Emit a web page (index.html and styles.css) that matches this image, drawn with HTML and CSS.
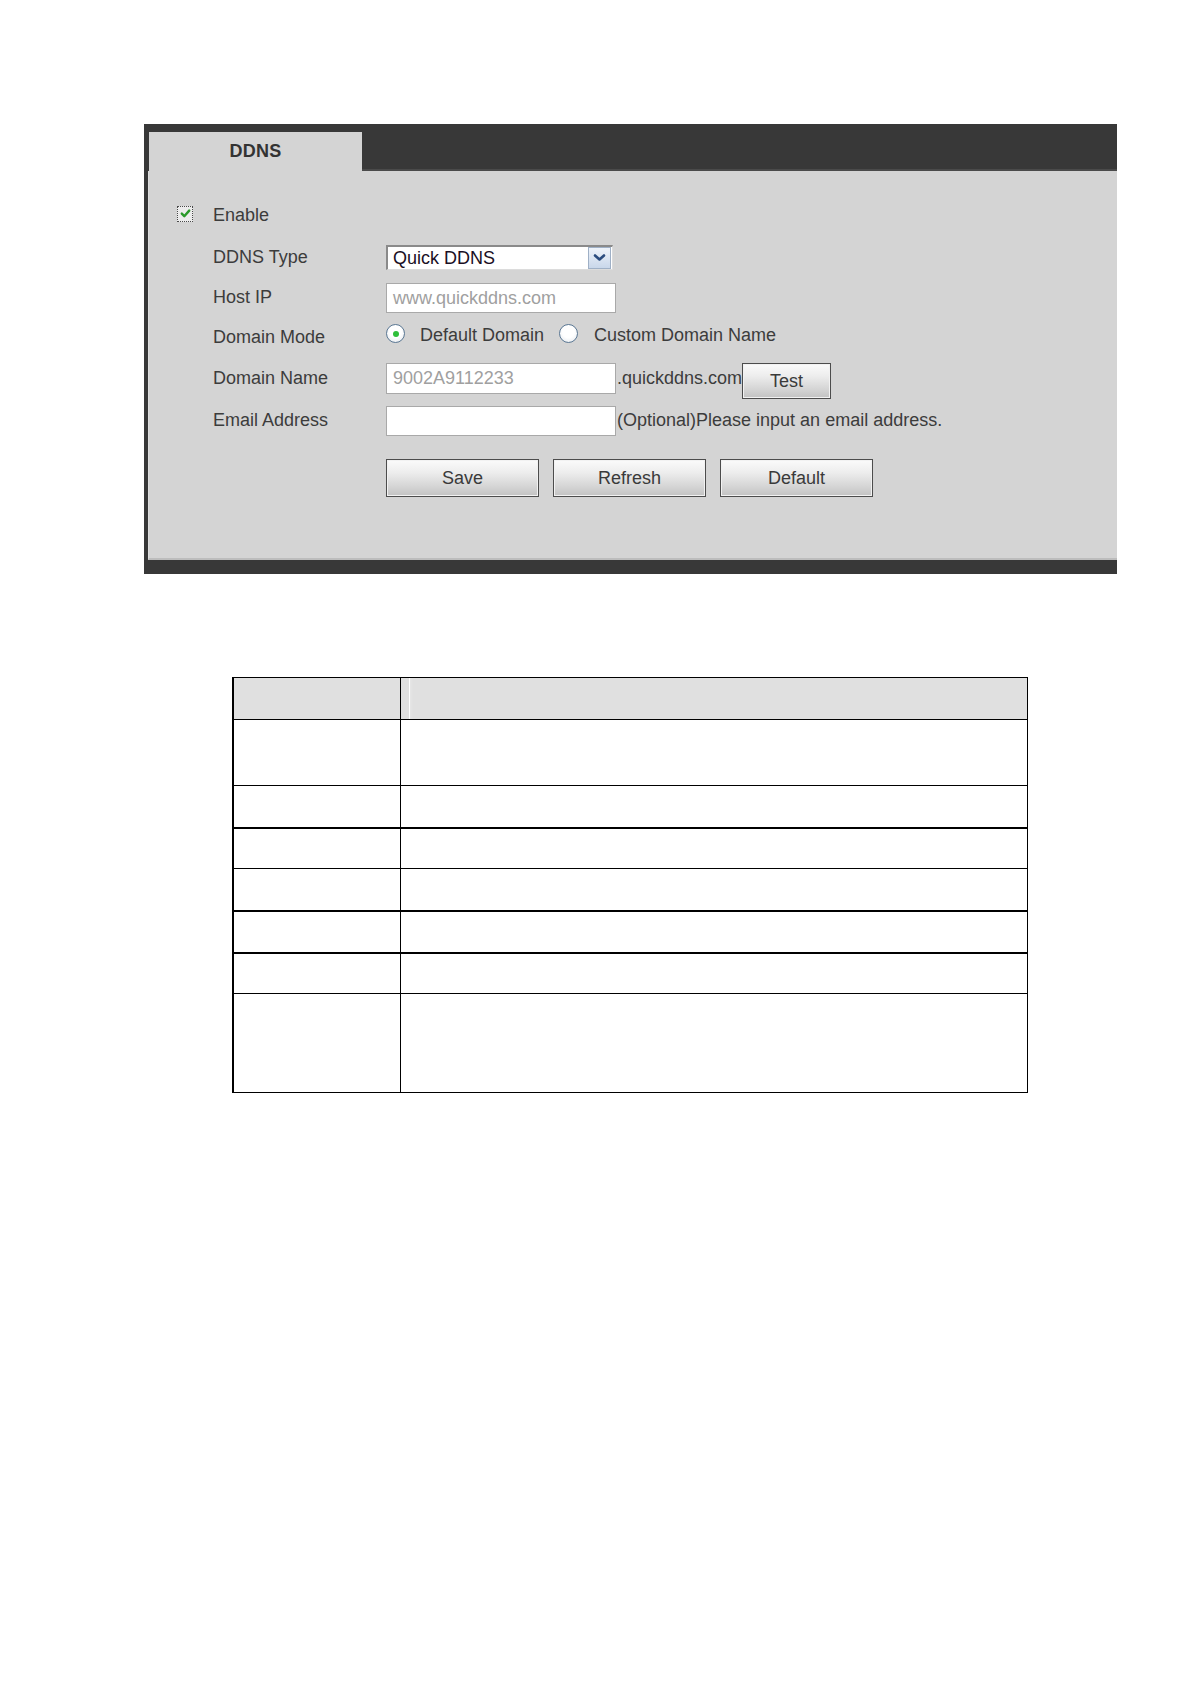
FILE: index.html
```html
<!DOCTYPE html>
<html lang="en">
<head>
<meta charset="utf-8">
<title>DDNS</title>
<link rel="stylesheet" href="styles.css">
</head>
<body>
<div class="panel">
  <div class="tabbar"><div class="tab">DDNS</div></div>
  <div class="content">
    <div class="row h41">
      <span class="cb"><svg width="13" height="13" viewBox="0 0 13 13"><path d="M2.8 6.6 L5.3 9.2 L10.2 3.6" fill="none" stroke="#2a9a2a" stroke-width="2.4" stroke-linecap="round" stroke-linejoin="round"/></svg></span>
      <span class="lbl">Enable</span>
    </div>
    <div class="row h42">
      <span></span>
      <span class="lbl">DDNS Type</span>
      <div class="select"><span class="sel-text">Quick DDNS</span><span class="sel-btn"><svg width="21" height="21" viewBox="0 0 21 21"><path d="M6 8.5 L10.5 12.5 L15 8.5" fill="none" stroke="#2b4c7e" stroke-width="2.6" stroke-linecap="round" stroke-linejoin="round"/></svg></span></div>
    </div>
    <div class="row h39">
      <span></span>
      <span class="lbl">Host IP</span>
      <div class="input dim">www.quickddns.com</div>
    </div>
    <div class="row h41">
      <span></span>
      <span class="lbl">Domain Mode</span>
      <div class="radios">
        <span class="radio on"></span><span class="lbl">Default Domain</span>
        <span class="radio"></span><span class="lbl">Custom Domain Name</span>
      </div>
    </div>
    <div class="row h41">
      <span></span>
      <span class="lbl">Domain Name</span>
      <div class="ctrl">
        <div class="input dim tall">9002A9112233</div><span class="suffix">.quickddns.com</span><button class="btn test">Test</button>
      </div>
    </div>
    <div class="row h43">
      <span></span>
      <span class="lbl">Email Address</span>
      <div class="ctrl">
        <div class="input"></div><span class="suffix">(Optional)Please input an email address.</span>
      </div>
    </div>
    <div class="row actions">
      <span></span>
      <span></span>
      <div class="btns">
        <button class="btn big">Save</button>
        <button class="btn big">Refresh</button>
        <button class="btn big">Default</button>
      </div>
    </div>
  </div>
</div>

<div class="grid">
  <div class="trow head"><div class="tc1"></div><div class="tc2"></div></div>
  <div class="trow r66"><div class="tc1"></div><div class="tc2"></div></div>
  <div class="trow r42"><div class="tc1"></div><div class="tc2"></div></div>
  <div class="trow r41 thick"><div class="tc1"></div><div class="tc2"></div></div>
  <div class="trow r42"><div class="tc1"></div><div class="tc2"></div></div>
  <div class="trow r42 thick"><div class="tc1"></div><div class="tc2"></div></div>
  <div class="trow r41 thick"><div class="tc1"></div><div class="tc2"></div></div>
  <div class="trow r99"><div class="tc1"></div><div class="tc2"></div></div>
</div>
</body>
</html>
```

FILE: styles.css
```css
html, body {
  margin: 0;
  padding: 0;
  background: #ffffff;
}

body {
  font-family: "Liberation Sans", Arial, sans-serif;
  font-size: 18px;
  color: #3a3a3a;
  padding-top: 124px;
}

.panel {
  margin-left: 144px;
  width: 968px;
  background: #383838;
  padding: 0 0 14px 5px;
}

.tabbar {
  height: 47px;
  padding-top: 8px;
  box-sizing: border-box;
  border-bottom: 2px solid #4a4a4a;
}

.tab {
  width: 213px;
  height: 39px;
  background: #d4d4d4;
  font-weight: bold;
  color: #333;
  display: flex;
  align-items: center;
  justify-content: center;
  font-size: 18px;
  letter-spacing: 0.3px;
  position: relative;
  z-index: 1;
}

.content {
  background: #d4d4d4;
  padding: 24px 0 61px 28px;
  border-bottom: 2px solid #bcbcbc;
  border-left: 1px solid #dedede;
  margin-left: -1px;
}

.row {
  display: grid;
  grid-template-columns: 36px 173px auto;
  align-items: center;
}

.h39 { height: 39px; }
.h41 { height: 41px; }
.h42 { height: 42px; }
.h43 { height: 43px; }

.lbl {
  white-space: nowrap;
  color: #3c3c3c;
}

.cb {
  width: 16px;
  height: 16px;
  box-sizing: border-box;
  border: 1px dotted #4a4a4a;
  background: #ececec;
  display: flex;
  align-items: center;
  justify-content: center;
  margin-top: -4px;
}

.select {
  width: 227px;
  height: 25px;
  box-sizing: border-box;
  background: #ffffff;
  border-top: 2px solid #8a8a8a;
  border-left: 2px solid #8a8a8a;
  border-right: 1px solid #dcdcdc;
  border-bottom: 1px solid #dcdcdc;
  display: flex;
  align-items: center;
  justify-content: space-between;
}

.sel-text {
  color: #1a0f24;
  padding-left: 5px;
  line-height: 20px;
}

.sel-btn {
  width: 21px;
  height: 20px;
  margin-right: 1px;
  border: 1px solid #9fb0c6;
  background: linear-gradient(#eef3fa, #c9d7ea);
  display: flex;
  align-items: center;
  justify-content: center;
}

.input {
  width: 230px;
  height: 30px;
  box-sizing: border-box;
  background: #ffffff;
  border: 1px solid #a9a9a9;
  padding-left: 6px;
  line-height: 28px;
  color: #3c3c3c;
  white-space: nowrap;
}

.input.tall { height: 31px; line-height: 29px; }

.dim { color: #a0a0a0; }

.radios {
  display: flex;
  align-items: center;
  margin-top: -4px;
}

.radio {
  width: 19px;
  height: 19px;
  box-sizing: border-box;
  border-radius: 50%;
  border: 1.5px solid #5b7894;
  background: radial-gradient(circle at 50% 40%, #ffffff 0, #ffffff 45%, #dfe4ea 100%);
  position: relative;
  margin-top: -4px;
}

.radio.on::after {
  content: "";
  position: absolute;
  left: 50%;
  top: 50%;
  width: 6px;
  height: 6px;
  margin: -3px 0 0 -3px;
  border-radius: 50%;
  background: #2fbf3a;
}

.radios .radio:first-child { margin-right: 15px; }
.radios .radio + .lbl + .radio { margin-left: 15px; }
.radios .lbl:last-child { margin-left: 16px; }

.ctrl {
  display: flex;
  align-items: center;
  white-space: nowrap;
}

.suffix {
  color: #3c3c3c;
  padding-left: 1px;
}

.btn {
  font-family: "Liberation Sans", Arial, sans-serif;
  font-size: 18px;
  color: #3a3a3a;
  border: 1px solid #4c4c4c;
  background: linear-gradient(#fbfbfb 0%, #ededed 35%, #d4d4d4 75%, #c2c2c2 100%);
  box-shadow: inset 0 0 0 1px #f2f2f2;
  padding: 0;
  margin: 0;
  box-sizing: border-box;
}

.btn.test {
  width: 89px;
  height: 36px;
  margin-top: 5px;
}

.actions {
  margin-top: 17px;
  height: 38px;
}

.btns {
  display: flex;
  gap: 14px;
}

.btn.big {
  width: 153px;
  height: 38px;
}

.grid {
  margin: 103px 0 0 232px;
  width: 796px;
  box-sizing: border-box;
  border: 1px solid #000;
  border-left: 2px solid #000;
}

.trow {
  display: grid;
  grid-template-columns: 167px 1fr;
  box-sizing: border-box;
  border-top: 1px solid #000;
}

.trow.head {
  border-top: 0;
  height: 41px;
  background: #e0e0e0;
}

.tc1 {
  border-right: 1px solid #000;
}

.head .tc2 {
  background: linear-gradient(to right, #e0e0e0 0, #e0e0e0 8px, #ffffff 8px, #ffffff 9px, #e6e6e6 9px, #e0e0e0 12px);
}

.trow.thick { border-top: 2px solid #000; }

.r66 { height: 66px; }
.r42 { height: 42px; }
.r41 { height: 41px; }
.r99 { height: 99px; }
```
